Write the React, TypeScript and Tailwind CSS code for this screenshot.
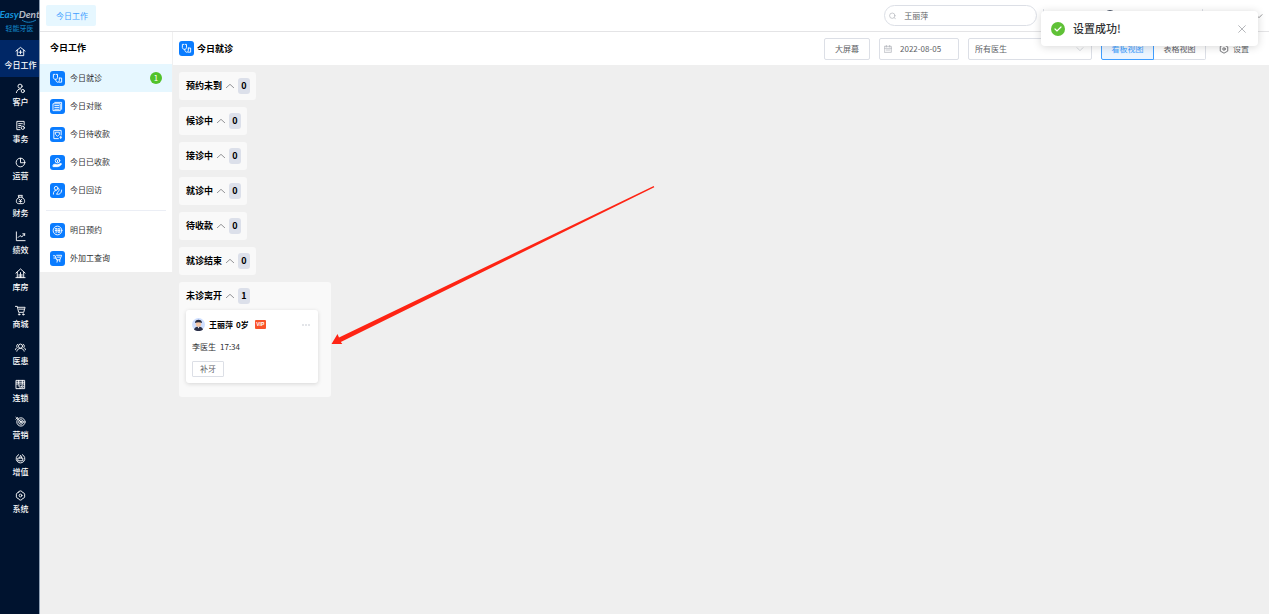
import { useState } from 'react';
import type { ReactNode } from 'react';

interface IconItem {
  label: string;
  icon: ReactNode;
}

interface Group {
  name: string;
  count: number;
}

const NAV: IconItem[] = [
  { label: '今日工作', icon: <><path d="M2 11 12 3l10 8" /><path d="M5 9v12h14V9" /><path d="M12 10v7M8.500 13.500h7" /></> },
  { label: '客户', icon: <><circle cx="11" cy="7" r="4.500" /><path d="M3 21c1-5 4-8 9-8" /><circle cx="17" cy="17.500" r="3.500" /></> },
  { label: '事务', icon: <><path d="M20 11V3H4v18h7" /><path d="M8 8h8M8 12h5M8 16h3" /><circle cx="17" cy="17" r="3.500" /></> },
  { label: '运营', icon: <><circle cx="12" cy="12" r="9.500" /><path d="M12 3v9.500h9" /></> },
  { label: '财务', icon: <><path d="M8 3h8l-1 4H9z" /><path d="M9 7c-5 3-6 6-6 9 0 4 3 5 5 5h8c2 0 5-1 5-5 0-3-1-6-6-9" /><path d="m9 11 3 3 3-3M12 14v4M9 16h6" /></> },
  { label: '绩效', icon: <><path d="M3 2v19h19" /><path d="m7 14 4-4 4 3 6-7" /><path d="M17 6h4v4" /></> },
  { label: '库房', icon: <><path d="M2 11 12 2l10 9" /><path d="M5 9v12M19 9v12M2 21h20" /><path d="M9 21v-7M12 21V10M15 21v-7" /></> },
  { label: '商城', icon: <><path d="M1 3h4l3 13h11l3-11H6" /><path d="M9 9h10" /><circle cx="9" cy="20.500" r="1.500" /><circle cx="18" cy="20.500" r="1.500" /></> },
  { label: '医患', icon: <><circle cx="12" cy="9" r="4.500" /><path d="M4 20c1-4 4-6 8-6s7 2 8 6" /><path d="M6 5C3 6 3 10 5 12c-2 1-3 2-4 5M18 5c3 1 3 5 1 7 2 1 3 2 4 5" /></> },
  { label: '连锁', icon: <><path d="M3 3h18v18H3z" /><path d="M3 7h18M3 11h18M8 3v8M16 3v8" /><path d="M7 15h4v6M15 15h3v3h-3z" /></> },
  { label: '营销', icon: <><circle cx="13" cy="13" r="9" /><circle cx="13" cy="13" r="5" /><circle cx="13" cy="13" r="1.500" /><path d="m2 3 11 10M2 7l4-4" /></> },
  { label: '增值', icon: <><path d="M16 3.500a9.500 9.500 0 1 1-8 0" /><path d="M7 11h10v6H7zM10 11l2-6 2 2v4" /></> },
  { label: '系统', icon: <><path d="m9 3 3-1 3 1 1 2 3 1 2 3v6l-2 3-3 1-1 2-3 1-3-1-1-2-3-1-2-3V9l2-3 3-1z" /><circle cx="12" cy="12" r="3" /></> },
];

const STETHOSCOPE = (
  <>
    <path d="M6 3H3v7c0 5 9 5 9 0V3H9" />
    <path d="M8 14c0 8 8 8 8 2v-5" />
    <path d="M16 11h5v9h-5" />
  </>
);

const TODAY: IconItem[] = [
  { label: '今日就诊', icon: STETHOSCOPE },
  { label: '今日对账', icon: <><path d="M6 3h15v15M3 6h15v15H3z" /><path d="M6 10h9M6 14h9M6 18h9" /></> },
  { label: '今日待收款', icon: <><path d="M20 13V3H4v18h10" /><path d="M8 7h8v5l-4 4-4-4z" /><path d="M19 16v5M17 18h4" /></> },
  { label: '今日已收款', icon: <><circle cx="12" cy="8" r="5" /><path d="m10 6 2 2 2-2M12 8v3" /><path d="M3 17c4-3 5 0 9 0l8-3c2 2-4 7-8 7H3z" fill="currentColor" /></> },
  { label: '今日回访', icon: <><circle cx="9" cy="7" r="4" /><path d="M3 20c0-6 2-8 6-8" /><path d="M10 20c6 2 11-2 11-9M15 8c3 4-3 6-4 11" /></> },
];

const TOMORROW: IconItem[] = [
  { label: '明日预约', icon: <><circle cx="12" cy="12" r="9.500" /><path d="M7 8h4M7 12h4M9 8v9M14 8h3v8h-3zM14 12h3" /></> },
  { label: '外加工查询', icon: <><path d="M3 6h4l3 9h7l4-10H10" /><path d="M4 11h5M12 9h5" /><path d="m12 15-1 5M17 15v4" /></> },
];

const GROUPS: Group[] = [
  { name: '预约未到', count: 0 },
  { name: '候诊中', count: 0 },
  { name: '接诊中', count: 0 },
  { name: '就诊中', count: 0 },
  { name: '待收款', count: 0 },
  { name: '就诊结束', count: 0 },
];

function Glyph({ children, className }: { children: ReactNode; className: string }) {
  return (
    <svg className={className} viewBox="0 0 24 24" fill="none" stroke="currentColor" strokeWidth={2} strokeLinecap="round" strokeLinejoin="round" aria-hidden="true">
      {children}
    </svg>
  );
}

function Tile({ children }: { children: ReactNode }) {
  return (
    <span className="flex size-[15px] shrink-0 items-center justify-center rounded-[3px] bg-[#0a7cff] text-white">
      <Glyph className="size-[11px]">{children}</Glyph>
    </span>
  );
}

function Logo() {
  return (
    <div className="relative flex h-10 flex-col items-center pt-2 whitespace-nowrap">
      <div className="font-['Lato','Liberation_Sans',sans-serif] text-[10px] leading-3 font-bold italic">
        <span className="text-[#1593dc]">Easy</span>
        <span className="text-[#b4bac4]">Dent</span>
      </div>
      <svg className="absolute top-[19px] left-[21px] h-1 w-4" viewBox="0 0 16 4" fill="none" stroke="#1583c4" aria-hidden="true">
        <path d="M1 1c4 3 9 3 14 0" />
      </svg>
      <div className="mt-0.5 text-[7px] leading-3 font-medium text-[#0f78b8]">轻能牙医</div>
    </div>
  );
}

function NavBar() {
  const [active, setActive] = useState('今日工作');
  return (
    <nav className="w-10 shrink-0 border-r border-[#8fa0b4] bg-[#00132f]">
      <Logo />
      {NAV.map((item) => (
        <button
          key={item.label}
          onClick={() => setActive(item.label)}
          className={`flex h-[37px] w-full flex-col items-center justify-center gap-0.5 pl-0.5 text-[8px] leading-3 font-medium whitespace-nowrap text-white ${active === item.label ? 'bg-[#002766]' : ''}`}
        >
          <Glyph className="size-[11px]">{item.icon}</Glyph>
          {item.label}
        </button>
      ))}
    </nav>
  );
}

function MenuItem({ item, active, badge, onSelect }: { item: IconItem; active: boolean; badge?: number; onSelect: () => void }) {
  return (
    <button onClick={onSelect} className={`flex h-7 w-full items-center gap-[5px] px-2.5 text-[8px] text-[#303133] ${active ? 'bg-[#e6f7ff]' : ''}`}>
      <Tile>{item.icon}</Tile>
      {item.label}
      {badge && (
        <span className="ml-auto flex size-3 items-center justify-center rounded-full bg-[#52c22b] text-[8px] leading-3 text-white">{badge}</span>
      )}
    </button>
  );
}

function SideMenu() {
  const [active, setActive] = useState('今日就诊');
  return (
    <aside className="w-[133px] shrink-0 self-start border-r border-[#f0f0f0] bg-white">
      <h2 className="h-8 px-2.5 text-[9px] leading-8 font-bold text-black">今日工作</h2>
      {TODAY.map((item) => (
        <MenuItem key={item.label} item={item} active={active === item.label} badge={item.label === '今日就诊' ? 1 : undefined} onSelect={() => setActive(item.label)} />
      ))}
      <hr className="mx-1.5 mt-1.5 mb-[5px] border-[#ebeef5]" />
      {TOMORROW.map((item) => (
        <MenuItem key={item.label} item={item} active={active === item.label} onSelect={() => setActive(item.label)} />
      ))}
    </aside>
  );
}

function TopBar() {
  return (
    <header className="flex h-8 shrink-0 items-center border-b border-[#e4e4e6] bg-white px-1.5">
      <button className="h-[21px] rounded-[2px] bg-[#e6f7ff] pr-2 pl-2.5 text-[8px] text-[#409eff]">今日工作</button>
      <label className="ml-auto flex h-[21px] w-[153px] items-center gap-2 rounded-full border border-[#dcdfe6] px-1">
        <Glyph className="size-2 text-[#a8abb2]"><circle cx="11" cy="11" r="9" /><path d="m18 18 4 4" /></Glyph>
        <input aria-label="搜索客户" defaultValue="王丽萍" className="w-full min-w-0 text-[8px] text-[#606266] outline-none" />
      </label>
      <div className="ml-1.5 flex w-[220px] items-center">
        <span className="h-3.5 w-px bg-[#dcdfe6]" />
        <span className="ml-[60px] size-3 rounded-full bg-[#4a5568]" />
        <span className="mr-[52px] ml-auto h-3.5 w-px bg-[#dcdfe6]" />
        <Glyph className="size-2 text-[#606266]"><path d="m3 8 9 9 9-9" /></Glyph>
      </div>
    </header>
  );
}

function Toolbar() {
  const [view, setView] = useState('board');
  return (
    <div className="flex h-[33px] shrink-0 items-center gap-[9px] bg-white pr-5 pl-1.5 text-[8px] text-[#606266]">
      <h1 className="mr-auto flex items-center gap-[3px] text-[9px] font-bold text-black">
        <Tile>{STETHOSCOPE}</Tile>
        今日就诊
      </h1>
      <button className="h-[22px] w-[46px] rounded-[2px] border border-[#dcdfe6]">大屏幕</button>
      <label className="flex h-[22px] w-20 items-center gap-2 rounded-[2px] border border-[#dcdfe6] px-1">
        <Glyph className="size-2 shrink-0 text-[#a8abb2]"><path d="M2 4h20v18H2zM2 10h20M7 1v5M17 1v5M6 15h12" /></Glyph>
        <input aria-label="日期" defaultValue="2022-08-05" className="w-full min-w-0 outline-none" />
      </label>
      <div className="relative">
        <select aria-label="医生" className="h-[22px] w-[124px] appearance-none rounded-[2px] border border-[#dcdfe6] px-1.5">
          <option>所有医生</option>
        </select>
        <Glyph className="pointer-events-none absolute top-[7px] right-2 size-2 text-[#c0c4cc]"><path d="m3 8 9 9 9-9" /></Glyph>
      </div>
      <div className="flex">
        <button
          onClick={() => setView('board')}
          className={`h-[22px] w-[53px] rounded-l-[2px] border ${view === 'board' ? 'border-[#409eff] bg-[#ecf5ff] text-[#409eff]' : 'border-[#dcdfe6]'}`}
        >
          看板视图
        </button>
        <button
          onClick={() => setView('table')}
          className={`h-[22px] w-[52px] rounded-r-[2px] border border-l-0 ${view === 'table' ? 'border-[#409eff] bg-[#ecf5ff] text-[#409eff]' : 'border-[#dcdfe6]'}`}
        >
          表格视图
        </button>
      </div>
      <button className="ml-1 flex items-center gap-1">
        <Glyph className="size-2.5"><path d="M12 2 21 7v10l-9 5-9-5V7z" /><circle cx="12" cy="12" r="3" /></Glyph>
        设置
      </button>
    </div>
  );
}

function GroupTitle({ name, count }: Group) {
  return (
    <button className="flex h-4 items-center gap-1 text-[9px] font-bold text-black">
      {name}
      <Glyph className="size-2 text-[#606266]"><path d="m1 17 11-10 11 10" /></Glyph>
      <span className="flex h-4 w-3 items-center justify-center rounded-[3px] bg-[#dce0ea]">{count}</span>
    </button>
  );
}

function Avatar() {
  return (
    <svg className="size-[13px] shrink-0" viewBox="0 0 26 26" aria-hidden="true">
      <circle cx="13" cy="13" r="13" fill="#cfdfff" />
      <path d="M4 23c1-4 5-6 9-6s8 2 9 6c-5 4-13 4-18 0z" fill="#2b3048" />
      <path d="m11 17 2 4 2-4z" fill="#fff" />
      <circle cx="13" cy="12" r="5.500" fill="#f6c7a5" />
      <path d="M6 10c-1-9 15-9 14 0-4-2-10-2-14 0z" fill="#252a40" />
    </svg>
  );
}

function PatientCard() {
  return (
    <article className="w-[132px] rounded-[3px] bg-white px-1.5 pt-2 pb-1.5 text-[8px] text-[#303133] shadow-[0_1px_4px_rgba(0,0,0,0.14)]">
      <div className="flex h-[13px] items-center">
        <Avatar />
        <span className="ml-1 flex gap-[3px] font-bold text-black">
          <span>王丽萍</span>
          <span>0岁</span>
        </span>
        <span className="ml-1.5 flex h-[9px] w-[11px] items-center justify-center rounded-[1px] bg-[#f9532a] font-['Liberation_Sans'] text-[5px] leading-none font-bold text-white">VIP</span>
        <button aria-label="更多" className="ml-auto text-[#c0c4cc]">
          <svg className="mr-0.5 h-2 w-2" viewBox="0 0 8 8" fill="currentColor"><circle cx="1" cy="4" r="0.800" /><circle cx="4" cy="4" r="0.800" /><circle cx="7" cy="4" r="0.800" /></svg>
        </button>
      </div>
      <p className="mt-2.5 flex gap-1 leading-3">
        <span>李医生</span>
        <span>17:34</span>
      </p>
      <span className="mt-2 flex h-4 w-8 items-center justify-center rounded-[1px] border border-[#dcdfe6] text-[#606266]">补牙</span>
    </article>
  );
}

function Toast({ onClose }: { onClose: () => void }) {
  return (
    <div role="alert" className="absolute top-[11px] right-[11px] flex h-[35px] w-[217px] items-center rounded-[4px] bg-white pr-3 pl-2.5 shadow-[0_1px_8px_rgba(0,0,0,0.16)]">
      <svg className="size-3.5" viewBox="0 0 14 14" fill="none" aria-hidden="true">
        <circle cx="7" cy="7" r="7" fill="#5fc136" />
        <path d="m4 7 2 2 4-4" stroke="#fff" strokeWidth="1.200" strokeLinecap="round" />
      </svg>
      <span className="ml-2 text-[11px] font-medium text-[#303133]">设置成功!</span>
      <button aria-label="关闭" onClick={onClose} className="ml-auto text-[#909399]">
        <Glyph className="size-2"><path d="m2 2 20 20M22 2 2 22" /></Glyph>
      </button>
    </div>
  );
}

export default function App() {
  const [toast, setToast] = useState(true);
  return (
    <div className="relative flex min-h-screen bg-[#efefef] font-['Noto_Sans_CJK_SC',sans-serif]">
      <NavBar />
      <div className="flex min-w-0 flex-1 flex-col">
        <TopBar />
        <div className="flex flex-1">
          <SideMenu />
          <main className="min-w-0 flex-1">
            <Toolbar />
            <div className="relative flex flex-col items-start gap-[7px] px-1.5 py-[7px]">
              {GROUPS.map((group) => (
                <section key={group.name} className="rounded-[3px] bg-[#f9f9f9] py-1.5 pr-1.5 pl-[7px]">
                  <GroupTitle {...group} />
                </section>
              ))}
              <section className="w-[152px] rounded-[3px] bg-[#f9f9f9] pt-1.5 pb-3.5 pl-[7px]">
                <GroupTitle name="未诊离开" count={1} />
                <div className="mt-1.5">
                  <PatientCard />
                </div>
              </section>
              {/* pointer to the group of patients who left */}
              <svg className="pointer-events-none absolute top-[121px] left-[158px] h-[160px] w-[324px]" viewBox="0 0 324 160" fill="#fe2414" aria-hidden="true">
                <path d="M0.500 158 6.500 148l1.500 3.500L322.700 0l0.600 1.200L9.800 156l1.500 2z" />
              </svg>
            </div>
          </main>
        </div>
      </div>
      {toast && <Toast onClose={() => setToast(false)} />}
    </div>
  );
}
